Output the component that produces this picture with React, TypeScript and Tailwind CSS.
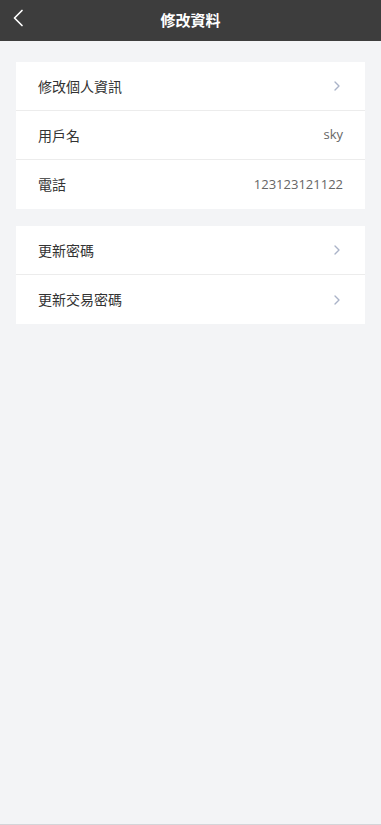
import { ChevronRight } from 'lucide-react'

interface Row { label: string; value?: string; arrow?: boolean }

const groups: Row[][] = [
  [
    { label: '修改個人資訊', arrow: true },
    { label: '用戶名', value: 'sky' },
    { label: '電話', value: '123123121122' },
  ],
  [
    { label: '更新密碼', arrow: true },
    { label: '更新交易密碼', arrow: true },
  ],
]

export default function App() {
  return (
    <div
      className="h-[825px] bg-[#f3f4f6] border-b border-[#d4d4d8] flex flex-col"
      style={{ fontFamily: '"Noto Sans CJK TC", "Noto Sans", sans-serif' }}
    >
      {/* Header */}
      <div className="h-[41px] bg-[#3d3d3d] flex items-center relative shrink-0">
        <button className="absolute left-[12px] top-[9px] text-white">
          <svg width="12" height="18" viewBox="0 0 12 18" fill="none">
            <path d="M10 1.5L2.5 9l7.5 7.5" stroke="currentColor" strokeWidth="1.7" strokeLinecap="round" strokeLinejoin="round" />
          </svg>
        </button>
        <h1 className="flex-1 text-center text-white text-[15px] font-bold">修改資料</h1>
      </div>

      <div className="px-4 pt-[21px] flex flex-col gap-[17px]">
        {groups.map((rows, gi) => (
          <div key={gi} className="bg-white">
            {rows.map((r, i) => (
              <div
                key={r.label}
                className={`h-[49px] flex items-center justify-between pl-[22px] pr-[22px] ${i < rows.length - 1 ? 'border-b border-[#ececec]' : ''}`}
              >
                <span className="text-[14px] text-[#333]">{r.label}</span>
                {r.arrow ? (
                  <ChevronRight size={16} strokeWidth={2} className="text-[#aab3c8] mr-[-2px]" />
                ) : (
                  <span className="text-[13px] text-[#666]" style={{ fontFamily: '"Open Sans", sans-serif' }}>{r.value}</span>
                )}
              </div>
            ))}
          </div>
        ))}
      </div>
    </div>
  )
}
